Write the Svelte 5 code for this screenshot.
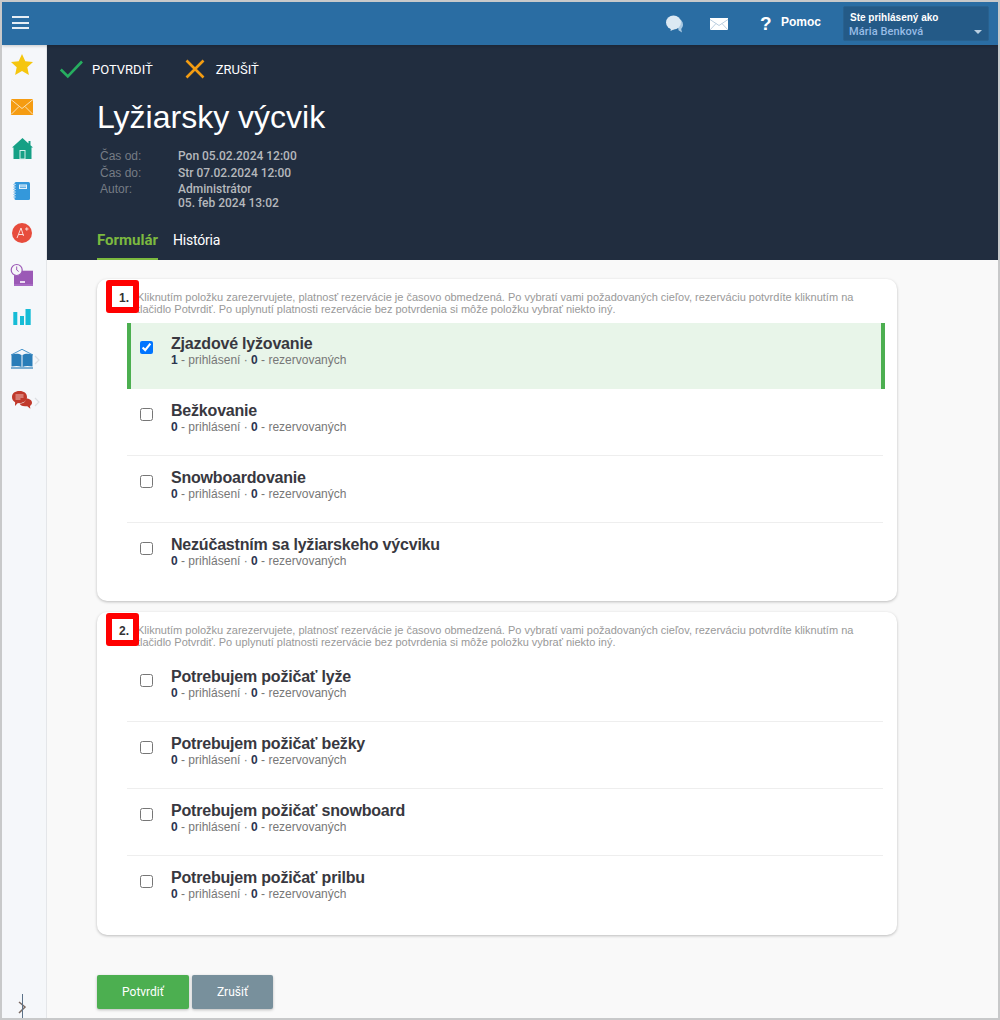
<script>
  const sections = [
    {
      num: '1.',
      items: [
        { name: 'Zjazdové lyžovanie', count: 1, checked: true },
        { name: 'Bežkovanie', count: 0 },
        { name: 'Snowboardovanie', count: 0 },
        { name: 'Nezúčastním sa lyžiarskeho výcviku', count: 0 }
      ]
    },
    {
      num: '2.',
      items: [
        { name: 'Potrebujem požičať lyže', count: 0 },
        { name: 'Potrebujem požičať bežky', count: 0 },
        { name: 'Potrebujem požičať snowboard', count: 0 },
        { name: 'Potrebujem požičať prilbu', count: 0 }
      ]
    }
  ];
</script>

<div class="frame">
  <header class="topbar">
    <button class="burger" aria-label="Menu"><span></span><span></span><span></span></button>
    <div class="top-right">
      <svg class="ico-chat" width="18" height="18" viewBox="0 0 18 18">
        <path d="M11 3.500a6 6 0 0 1 6 6c0 2-.8 3.400-1.800 4.400l.8 3.600-3.500-2.200z" fill="#a9c9e2" />
        <ellipse cx="7.500" cy="7.500" rx="7.500" ry="7" fill="#dce9f3" />
        <path d="M5 13l-.5 3 5-2.500z" fill="#dce9f3" />
      </svg>
      <svg class="ico-mail" width="18" height="12" viewBox="0 0 18 12">
        <rect width="18" height="12" fill="#fff" />
        <path d="M0 1.500l9 6 9-6M0 12l6-6.500M18 12l-6-6.500" fill="none" stroke="#a9c2d8" stroke-width=".8" />
      </svg>
      <span class="help-mark">?</span>
      <span class="help">Pomoc</span>
      <div class="user">
        <div class="user-label">Ste prihlásený ako</div>
        <div class="user-name">Mária Benková</div>
        <span class="caret"></span>
      </div>
    </div>
  </header>

  <div class="body">
    <nav class="side">
      <div class="side-icons">
        <svg width="24" height="24" viewBox="0 0 24 24"><path d="M12 1l3.300 7.200 7.700.8-5.700 5.200 1.600 7.800-6.900-4-6.900 4 1.600-7.800L1 9l7.700-.8z" fill="#f5c60f" /></svg>
        <svg width="24" height="24" viewBox="0 0 24 24"><rect x="1" y="4" width="22" height="16" fill="#f59c12" /><path d="M1 4.500l11 9 11-9M1 19.500l8-8M23 19.500l-8-8" fill="none" stroke="#fbe2b6" stroke-width="1" /></svg>
        <svg width="24" height="24" viewBox="0 0 24 24"><path d="M12.500 1L2 10.500h1.500V22h18V10.500H23l-2.500-2.300V4h-2v2.400z" fill="#16a085" /><rect x="10" y="13.500" width="5" height="8.500" fill="none" stroke="#d5f0ea" stroke-width="1" /></svg>
        <svg width="24" height="24" viewBox="0 0 24 24"><rect x="4.500" y="3" width="15.500" height="18" rx="1.500" fill="#3498db" /><rect x="9" y="5.500" width="8" height="4.500" fill="#e3f1fb" /><path d="M10 7h6M10 8.500h6" stroke="#3498db" stroke-width=".7" /><path d="M3 5.500h3M3 8h3M3 10.500h3M3 13h3M3 15.500h3M3 18h3" stroke="#a9d2ef" stroke-width="1" /></svg>
        <svg width="24" height="24" viewBox="0 0 24 24"><circle cx="12" cy="12" r="10" fill="#e74c3c" /><path d="M7 17l4-10 2.500 8M8.500 13.500h5" fill="none" stroke="#fbdcd8" stroke-width="1" /><path d="M15 8h3.500M16.800 6.300v3.400" stroke="#fbdcd8" stroke-width="1" /></svg>
        <svg width="24" height="24" viewBox="0 0 24 24"><rect x="4" y="7.700" width="19" height="13.300" fill="#9b59b6" /><rect x="4" y="21" width="19" height="2" fill="#a86cc4" /><rect x="10" y="18" width="5" height="2" fill="#eadcf2" /><circle cx="6.700" cy="7" r="5.500" fill="#f6f7f9" stroke="#9b59b6" stroke-width="1.200" /><path d="M6.700 3.500V7l2 1.500" fill="none" stroke="#9b59b6" stroke-width="1" /></svg>
        <svg width="24" height="24" viewBox="0 0 24 24"><rect x="3.300" y="7" width="4" height="13" fill="#16bcd6" /><rect x="10" y="11" width="4" height="9" fill="#16bcd6" /><rect x="15.500" y="4" width="5.200" height="16" fill="#16bcd6" /></svg>
        <div class="has-sub">
          <svg width="24" height="24" viewBox="0 0 24 24"><path d="M1 8l11-5.700L23 8" fill="none" stroke="#4a96cc" stroke-width="1" /><path d="M1.500 7.500c4-1 7.500-1 10 .5v12c-2.500-1.300-6-1.300-10-.5zM22.500 7.500c-4-1-7.500-1-10 .5v12c2.500-1.300 6-1.300 10-.5z" fill="#2a7db8" /><path d="M1 21h22" stroke="#2a7db8" stroke-width="1.200" /></svg>
          <svg class="chev" width="6" height="10" viewBox="0 0 6 10"><path d="M1 1l4 4-4 4" fill="none" stroke="#dcdfe3" stroke-width="1.200" /></svg>
        </div>
        <div class="has-sub">
          <svg width="24" height="24" viewBox="0 0 24 24"><path d="M9.500 2C14 2 17 4.300 17 8s-3 6-7.500 6l-2 .2L5 17l.1-3.700C3.300 12.300 2 10.300 2 8c0-3.700 3-6 7.500-6z" fill="#c0392b" /><path d="M5.500 6h8M5.500 8h8M5.500 10h5" stroke="#eebbb5" stroke-width="1" /><path d="M16 9.500c3.500 0 6 1.700 6 4.200 0 1.400-.8 2.500-2 3.200l.3 2.800-3-2.400H15c-3 0-5-1.200-5.500-2.800 4 0 6.500-2 6.500-5z" fill="#c0392b" /></svg>
          <svg class="chev" width="6" height="10" viewBox="0 0 6 10"><path d="M1 1l4 4-4 4" fill="none" stroke="#dcdfe3" stroke-width="1.200" /></svg>
        </div>
      </div>
      <div class="side-toggle">
        <svg width="10" height="24" viewBox="0 0 10 24"><path d="M1 8l6 5-6 6" fill="none" stroke="#7a6a62" stroke-width="1.500" /><path d="M4.500 0v24" stroke="#5c7289" stroke-width="1" /></svg>
      </div>
    </nav>

    <main class="main">
      <section class="head">
        <div class="actions">
          <button class="act">
            <svg width="24" height="20" viewBox="0 0 24 20"><path d="M1.800 10.500l7 7L23 2.500" fill="none" stroke="#27ae60" stroke-width="2.600" /></svg>
            POTVRDIŤ
          </button>
          <button class="act cancel">
            <svg width="20" height="20" viewBox="0 0 20 20"><path d="M1.500 1.500l17 17M18.500 1.500l-17 17" fill="none" stroke="#f39c12" stroke-width="2.600" /></svg>
            ZRUŠIŤ
          </button>
        </div>
        <h1>Lyžiarsky výcvik</h1>
        <dl class="meta">
          <dt>Čas od:</dt><dd>Pon 05.02.2024 12:00</dd>
          <dt>Čas do:</dt><dd>Str 07.02.2024 12:00</dd>
          <dt>Autor:</dt><dd>Administrátor<br />05. feb 2024 13:02</dd>
        </dl>
        <div class="tabs">
          <span class="tab active">Formulár</span>
          <span class="tab">História</span>
        </div>
      </section>

      <section class="content">
        {#each sections as s}
          <div class="card">
            <span class="num">{s.num}</span>
            <p class="hint">Kliknutím položku zarezervujete, platnosť rezervácie je časovo obmedzená. Po vybratí vami požadovaných cieľov, rezerváciu potvrdíte kliknutím na tlačidlo Potvrdiť. Po uplynutí platnosti rezervácie bez potvrdenia si môže položku vybrať niekto iný.</p>
            <div class="list">
              {#each s.items as item}
                <label class="item" class:selected={item.checked}>
                  <input type="checkbox" checked={item.checked} />
                  <div>
                    <div class="name">{item.name}</div>
                    <div class="stats"><b>{item.count}</b> - prihlásení · <b>0</b> - rezervovaných</div>
                  </div>
                </label>
              {/each}
            </div>
          </div>
        {/each}
        <div class="buttons">
          <button class="btn ok">Potvrdiť</button>
          <button class="btn no">Zrušiť</button>
        </div>
      </section>
    </main>
  </div>
</div>

<style>
  :global(body) {
    margin: 0;
    font-family: Roboto, "Liberation Sans", sans-serif;
  }
  button {
    font: inherit;
    border: 0;
    background: none;
    padding: 0;
    cursor: pointer;
  }
  .frame {
    width: 1000px;
    height: 1020px;
    box-sizing: border-box;
    border: 2px solid #c8c9ca;
    display: flex;
    flex-direction: column;
    overflow: hidden;
  }
  .topbar {
    position: relative;
    z-index: 1;
    height: 43px;
    flex: none;
    background: #2a6da3;
    box-shadow: 0 1px 3px rgba(0, 0, 0, 0.2);
    display: flex;
    align-items: center;
    justify-content: space-between;
    padding-right: 9px;
  }
  .burger {
    width: 17px;
    margin: 0 0 2px 10px;
    display: flex;
    flex-direction: column;
    gap: 3.500px;
  }
  .burger span {
    height: 2px;
    background: #e6eef5;
  }
  .top-right {
    display: flex;
    align-items: center;
  }
  .ico-chat {
    margin-right: 26px;
  }
  .ico-mail {
    margin-right: 32px;
  }
  .help-mark {
    color: #fff;
    font: bold 19px/20px "Liberation Sans", sans-serif;
    margin-right: 9px;
    width: 12px;
  }
  .help {
    color: #fff;
    font: bold 12px "Liberation Sans", sans-serif;
    margin: 0 22px 3px 0;
  }
  .user {
    position: relative;
    width: 146px;
    height: 35px;
    box-sizing: border-box;
    background: #245a87;
    border: 1px solid #28618f;
    border-radius: 2px;
    padding: 4px 6px;
  }
  .user-label {
    color: #fff;
    font: bold 10px/13px "Liberation Sans", sans-serif;
  }
  .user-name {
    color: #98bce6;
    font: 500 11px/13px Roboto, sans-serif;
    letter-spacing: 0.1px;
    margin-top: 1px;
    margin-left: -1px;
  }
  .caret {
    position: absolute;
    right: 6px;
    bottom: 6px;
    border: 4px solid transparent;
    border-top-color: #b9cfe2;
    border-bottom: 0;
  }
  .body {
    flex: 1;
    min-height: 0;
    display: flex;
  }
  .side {
    width: 45px;
    flex: none;
    background: #f5f7fa;
    border-right: 1px solid #e4e6e9;
    box-sizing: border-box;
    display: flex;
    flex-direction: column;
    justify-content: space-between;
    padding: 8px 0 0 8px;
  }
  .side-icons {
    display: flex;
    flex-direction: column;
    gap: 18px;
  }
  .side-icons svg {
    display: block;
  }
  .has-sub {
    position: relative;
  }
  .chev {
    position: absolute;
    left: 24px;
    top: 8px;
  }
  .side-toggle {
    margin-left: 8px;
    height: 24px;
  }
  .main {
    flex: 1;
    min-width: 0;
    display: flex;
    flex-direction: column;
  }
  .head {
    background: #212d3f;
    height: 215px;
    flex: none;
    box-sizing: border-box;
    padding: 12px 0 0 12px;
    color: #fff;
  }
  .actions {
    display: flex;
    gap: 32px;
    height: 24px;
  }
  .act {
    display: flex;
    align-items: center;
    gap: 9px;
    color: #fff;
    font-size: 13px;
  }
  .act.cancel {
    gap: 11px;
  }
  h1 {
    font: 400 32px/38px "Liberation Sans", sans-serif;
    margin: 17px 0 0 38px;
  }
  .meta {
    margin: 13.400px 0 0 41px;
    display: grid;
    grid-template-columns: 78px 1fr;
    row-gap: 2.500px;
    font: 500 12px/14px Roboto, "Liberation Sans", sans-serif;
  }
  dt {
    color: #767c85;
    font: 400 12px/14px "Liberation Sans", sans-serif;
  }
  dd {
    margin: 0;
    color: #b5b8bc;
  }
  .tabs {
    margin: 13.600px 0 0 38px;
    display: flex;
    gap: 15px;
    font-size: 14px;
  }
  .tab {
    padding: 8px 0 10px;
    line-height: 16px;
    letter-spacing: -0.2px;
  }
  .tab.active {
    color: #7cb93f;
    font-size: 15px;
    font-weight: 700;
    letter-spacing: 0;
    border-bottom: 2px solid #7cb93f;
  }
  .content {
    flex: 1;
    min-height: 0;
    background: #f9f9f9;
    padding: 19px 101px 0 50px;
  }
  .card {
    position: relative;
    background: #fff;
    border-radius: 10px;
    box-shadow: 0 1px 3px rgba(0, 0, 0, 0.25);
    padding: 12px 14px 0 30px;
    height: 322.400px;
    box-sizing: border-box;
    margin-bottom: 11px;
  }
  .num {
    position: absolute;
    left: 9px;
    top: 1px;
    width: 33px;
    height: 33px;
    box-sizing: border-box;
    border: 6px solid #ff0000;
    border-radius: 3px;
    background: #fff;
    padding-left: 3px;
    font: bold 12px/25px "Liberation Sans", sans-serif;
    color: #333;
    text-align: center;
  }
  .hint {
    margin: 0 0 0 10px;
    font: 11px/12px "Liberation Sans", sans-serif;
    color: #999;
  }
  .list {
    margin-top: 8px;
  }
  .item {
    display: flex;
    height: 66px;
    margin-bottom: 1px;
    box-sizing: border-box;
    padding: 12px 0 0 13px;
    border-bottom: 1px solid #eee;
    gap: 18px;
  }
  .item:last-child {
    border-bottom: 0;
  }
  .item.selected {
    background: #e8f5e9;
    border-left: 4px solid #4caf50;
    border-right: 4px solid #4caf50;
    border-bottom: 0;
    padding-left: 9px;
    margin-right: -2px;
  }
  input {
    margin: 6px 0 0;
    width: 13px;
    height: 13px;
    flex: none;
  }
  .name {
    font: bold 16px/18px "Liberation Sans", sans-serif;
    letter-spacing: -0.2px;
    color: #383840;
  }
  .stats {
    font: 12px/14px "Liberation Sans", sans-serif;
    color: #777;
  }
  .stats b {
    color: #2c3550;
  }
  .buttons {
    margin-top: 40px;
    display: flex;
    gap: 3px;
  }
  .btn {
    height: 34px;
    color: #fff;
    font-size: 12px;
    border-radius: 2px;
    box-shadow: 0 1px 3px rgba(0, 0, 0, 0.25);
  }
  .btn.ok {
    width: 92px;
    background: #4caf50;
  }
  .btn.no {
    width: 81px;
    background: #78909c;
  }
</style>
